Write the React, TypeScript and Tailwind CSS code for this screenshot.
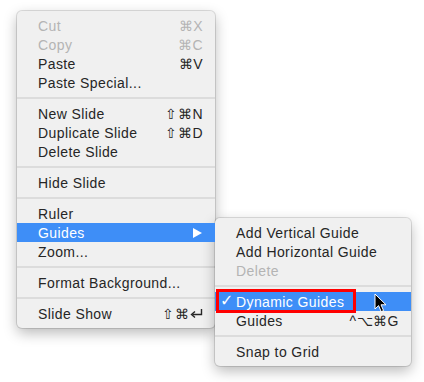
import React from 'react'

type Item =
  | { kind: 'sep' }
  | {
      kind: 'item'
      label: string
      shortcut?: string
      enter?: boolean
      disabled?: boolean
      active?: boolean
      submenu?: boolean
      checked?: boolean
      marked?: boolean
    }

const mainItems: Item[] = [
  { kind: 'item', label: 'Cut', shortcut: '⌘X', disabled: true },
  { kind: 'item', label: 'Copy', shortcut: '⌘C', disabled: true },
  { kind: 'item', label: 'Paste', shortcut: '⌘V' },
  { kind: 'item', label: 'Paste Special...' },
  { kind: 'sep' },
  { kind: 'item', label: 'New Slide', shortcut: '⇧⌘N' },
  { kind: 'item', label: 'Duplicate Slide', shortcut: '⇧⌘D' },
  { kind: 'item', label: 'Delete Slide' },
  { kind: 'sep' },
  { kind: 'item', label: 'Hide Slide' },
  { kind: 'sep' },
  { kind: 'item', label: 'Ruler' },
  { kind: 'item', label: 'Guides', active: true, submenu: true },
  { kind: 'item', label: 'Zoom...' },
  { kind: 'sep' },
  { kind: 'item', label: 'Format Background...' },
  { kind: 'sep' },
  { kind: 'item', label: 'Slide Show', shortcut: '⇧⌘', enter: true },
]

const subItems: Item[] = [
  { kind: 'item', label: 'Add Vertical Guide' },
  { kind: 'item', label: 'Add Horizontal Guide' },
  { kind: 'item', label: 'Delete', disabled: true },
  { kind: 'sep' },
  { kind: 'item', label: 'Dynamic Guides', active: true, checked: true, marked: true },
  { kind: 'item', label: 'Guides', shortcut: '^⌥⌘G' },
  { kind: 'sep' },
  { kind: 'item', label: 'Snap to Grid' },
]

function Cursor() {
  return (
    <svg width="13" height="20" viewBox="0 0 13 20" className="absolute left-[159px] top-[1px]">
      <path
        d="M1 1 L1 16 L4.6 12.6 L7.2 18.6 L9.6 17.6 L7 11.8 L12 11.8 Z"
        fill="#000"
        stroke="#fff"
        strokeWidth="1"
        strokeLinejoin="round"
      />
    </svg>
  )
}

function EnterGlyph() {
  return (
    <svg width="13" height="11" viewBox="0 0 13 11" className="ml-[1px]">
      <path d="M11.5 1 V6.5 H2.5" fill="none" stroke="#262626" strokeWidth="1.4" />
      <path d="M5 3.5 L1.5 6.5 L5 9.5" fill="none" stroke="#262626" strokeWidth="1.4" />
    </svg>
  )
}

function Menu({ items, width }: { items: Item[]; width: string }) {
  return (
    <div
      className={`${width} rounded-[5px] bg-[#f0f0f0] py-[5px] shadow-[0_0_0_1px_rgba(0,0,0,0.12),0_5px_14px_rgba(0,0,0,0.28)]`}
    >
      {items.map((it, i) =>
        it.kind === 'sep' ? (
          <div key={i} className="flex h-[12px] items-center">
            <div className="h-[2px] w-full bg-[#dcdcdc]" />
          </div>
        ) : (
          <div
            key={i}
            className={`relative flex h-[19px] items-center pl-[21px] pr-[12px] text-[14px] leading-none tracking-[0.4px] ${
              it.active ? 'bg-[#3e8ef7] text-white' : it.disabled ? 'text-[#b4b4b4]' : 'text-[#262626]'
            }`}
          >
            {it.checked && (
              <span
                className="absolute left-[5px] top-[1px] text-[16px] leading-none"
                style={{ fontFamily: '"DejaVu Sans", sans-serif' }}
              >
                ✓
              </span>
            )}
            <span className="flex-1">{it.label}</span>
            {it.shortcut && <span className="tracking-[0.5px]">{it.shortcut}</span>}
            {it.enter && <EnterGlyph />}
            {it.submenu && (
              <svg width="9" height="10" viewBox="0 0 9 10" className="mr-[1px]">
                <path d="M0 0 L9 5 L0 10 Z" fill="#fff" />
              </svg>
            )}
            {it.marked && (
              <>
                <div className="absolute left-[1px] top-[-3px] h-[24px] w-[140px] border-[3px] border-[#ff0000]" />
                <Cursor />
              </>
            )}
          </div>
        )
      )}
    </div>
  )
}

export default function App() {
  return (
    <div
      className="h-[382px] w-[424px] bg-white pl-[17px] pt-[11px]"
      style={{ fontFamily: '"Liberation Sans", Arial, sans-serif' }}
    >
      <div className="flex items-start">
        <Menu items={mainItems} width="w-[198px]" />
        <div className="mt-[207px]">
          <Menu items={subItems} width="w-[196px]" />
        </div>
      </div>
    </div>
  )
}
